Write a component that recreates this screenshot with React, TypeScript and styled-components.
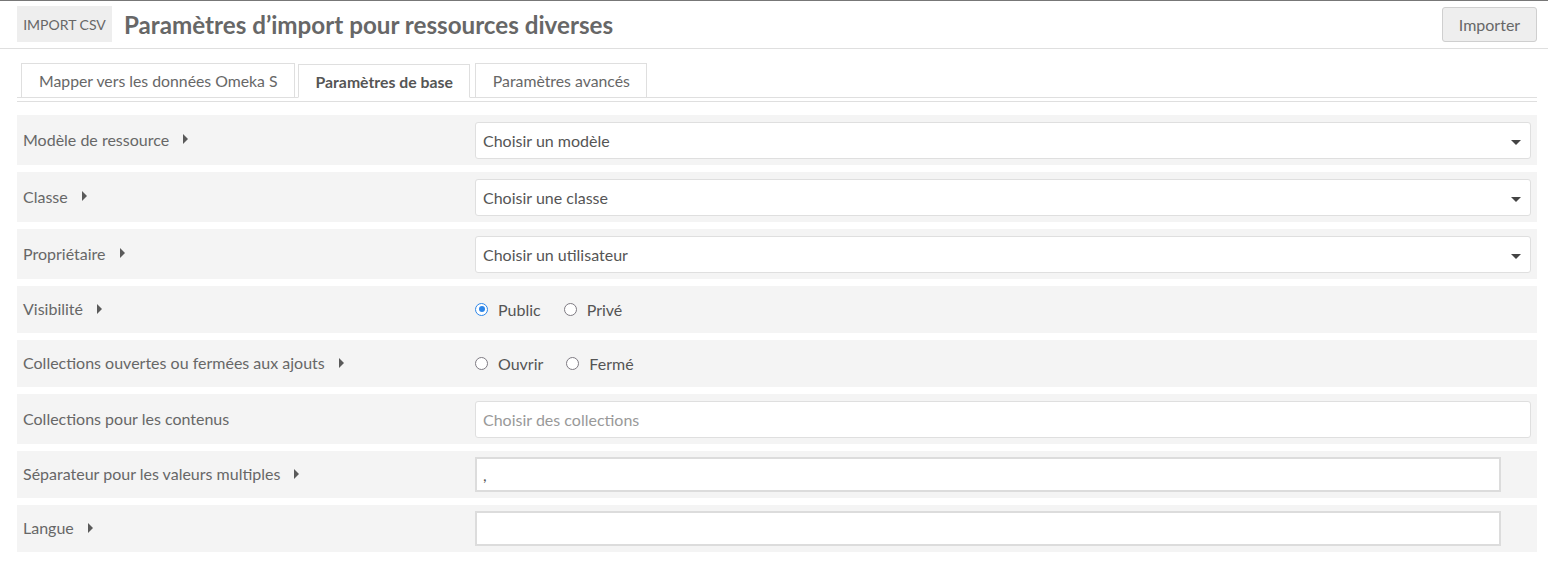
import React from "react";
import styled, { createGlobalStyle } from "styled-components";

const Global = createGlobalStyle`
  html, body { margin: 0; padding: 0; background: #fff; }
  body { font-family: Lato, "Open Sans", sans-serif; color: #676767; border-top: 1px solid #777; }
  * { box-sizing: border-box; }
`;

const Header = styled.header`
  display: flex;
  align-items: center;
  height: 48px;
  padding: 0 11px 0 17px;
  border-bottom: 1px solid #dfdfdf;
`;

const Badge = styled.div`
  background: #eeeeee;
  color: #676767;
  font-size: 14px;
  height: 36px;
  width: 95px;
  display: flex;
  align-items: center;
  justify-content: center;
  margin-top: -1px;
`;

const Title = styled.h1`
  margin: 0 0 0 12px;
  font-size: 24.2px;
  font-weight: 700;
  color: #676767;
  flex: 1;
`;

const ImportButton = styled.button`
  width: 95px;
  height: 35px;
  background: #eeeeee;
  border: 1px solid #cfcfcf;
  border-radius: 3px;
  color: #676767;
  font-family: Lato, sans-serif;
  font-size: 16px;
  margin-top: -1px;
`;

const Main = styled.main`
  padding: 14px 11px 0 17px;
`;

const TabBar = styled.div`
  display: flex;
  align-items: flex-end;
  padding-left: 4px;
  border-bottom: 1px solid #dfdfdf;
`;

const Tab = styled.div<{ $active?: boolean; $gap: number }>`
  height: 34px;
  padding: 0 16px 0 17px;
  margin-right: ${(p) => p.$gap}px;
  display: flex;
  align-items: center;
  font-size: 15.8px;
  border: 1px solid #dfdfdf;
  border-bottom: ${(p) => (p.$active ? "1px solid #fff" : "none")};
  margin-bottom: ${(p) => (p.$active ? "-1px" : "0")};
  background: #fff;
  color: ${(p) => (p.$active ? "#555" : "#676767")};
  font-weight: ${(p) => (p.$active ? 700 : 400)};
`;

const SecondLine = styled.div`
  height: 1px;
  background: #dfdfdf;
  margin-top: 3px;
  margin-bottom: 13px;
`;

const Rows = styled.div`
  display: flex;
  flex-direction: column;
  gap: 7px;
`;

const Row = styled.div<{ $h: number }>`
  display: grid;
  grid-template-columns: 452px 1fr;
  align-items: center;
  height: ${(p) => p.$h}px;
  background: #f4f4f4;
  padding: 0 6px;
`;

const Label = styled.div`
  font-size: 16px;
  color: #676767;
  display: flex;
  align-items: center;
  margin-top: -2px;
`;

const Caret = styled.span`
  display: inline-block;
  width: 0;
  height: 0;
  border-top: 5px solid transparent;
  border-bottom: 5px solid transparent;
  border-left: 5.5px solid #5a5a5a;
  margin-left: 14px;
`;

const SelectBox = styled.div<{ $placeholder?: boolean }>`
  position: relative;
  height: 37px;
  background: #fff;
  border: 1px solid #dfdfdf;
  border-radius: 3px;
  display: flex;
  align-items: center;
  padding-left: 7px;
  font-size: 16px;
  color: ${(p) => (p.$placeholder ? "#999" : "#555")};
`;

const DownArrow = styled.span`
  position: absolute;
  right: 9px;
  top: 17px;
  width: 0;
  height: 0;
  border-left: 5px solid transparent;
  border-right: 5px solid transparent;
  border-top: 5px solid #444;
`;

const TextInput = styled.div`
  height: 35px;
  margin-right: 30px;
  background: #fff;
  border: 2px solid #dcdcdc;
  display: flex;
  align-items: center;
  padding-left: 6px;
  font-size: 16px;
  color: #555;
`;

const Radios = styled.div`
  display: flex;
  align-items: center;
  font-size: 16px;
  color: #555;
  margin-top: -1px;
`;

const RadioItem = styled.label`
  display: flex;
  align-items: center;
  margin-right: 23px;
`;

const Circle = styled.span<{ $checked?: boolean }>`
  width: 13px;
  height: 13px;
  border-radius: 50%;
  border: 1.5px solid ${(p) => (p.$checked ? "#2d86e8" : "#7e7a82")};
  background: #fff;
  margin-right: 10px;
  display: flex;
  align-items: center;
  justify-content: center;
  &::after {
    content: "";
    display: ${(p) => (p.$checked ? "block" : "none")};
    width: 6px;
    height: 6px;
    border-radius: 50%;
    background: #2d86e8;
  }
`;

const Radio = ({ label, checked }: { label: string; checked?: boolean }) => (
  <RadioItem>
    <Circle $checked={checked} />
    {label}
  </RadioItem>
);

export default function App() {
  return (
    <>
      <Global />
      <Header>
        <Badge>IMPORT CSV</Badge>
        <Title>Paramètres d’import pour ressources diverses</Title>
        <ImportButton>Importer</ImportButton>
      </Header>
      <Main>
        <TabBar>
          <Tab $gap={3}>Mapper vers les données Omeka S</Tab>
          <Tab $gap={5} $active>Paramètres de base</Tab>
          <Tab $gap={0}>Paramètres avancés</Tab>
        </TabBar>
        <SecondLine />
        <Rows>
          <Row $h={50}>
            <Label>Modèle de ressource<Caret /></Label>
            <SelectBox>Choisir un modèle<DownArrow /></SelectBox>
          </Row>
          <Row $h={50}>
            <Label>Classe<Caret /></Label>
            <SelectBox>Choisir une classe<DownArrow /></SelectBox>
          </Row>
          <Row $h={50}>
            <Label>Propriétaire<Caret /></Label>
            <SelectBox>Choisir un utilisateur<DownArrow /></SelectBox>
          </Row>
          <Row $h={47}>
            <Label>Visibilité<Caret /></Label>
            <Radios>
              <Radio label="Public" checked />
              <Radio label="Privé" />
            </Radios>
          </Row>
          <Row $h={47}>
            <Label>Collections ouvertes ou fermées aux ajouts<Caret /></Label>
            <Radios>
              <Radio label="Ouvrir" />
              <Radio label="Fermé" />
            </Radios>
          </Row>
          <Row $h={50}>
            <Label>Collections pour les contenus</Label>
            <SelectBox $placeholder>Choisir des collections</SelectBox>
          </Row>
          <Row $h={47}>
            <Label>Séparateur pour les valeurs multiples<Caret /></Label>
            <TextInput>,</TextInput>
          </Row>
          <Row $h={47}>
            <Label>Langue<Caret /></Label>
            <TextInput />
          </Row>
        </Rows>
      </Main>
    </>
  );
}
